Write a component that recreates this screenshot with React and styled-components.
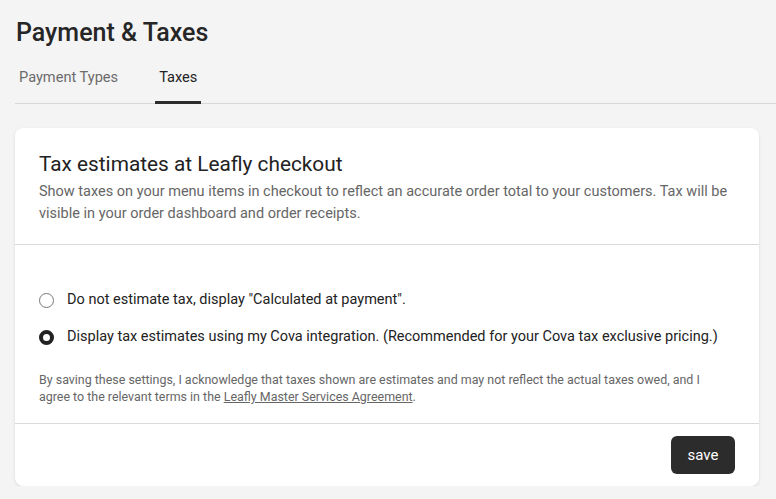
import React, { useState } from "react";
import styled, { createGlobalStyle } from "styled-components";

const Global = createGlobalStyle`
  html, body { margin: 0; padding: 0; background: #f4f4f4; }
  body { font-family: "Roboto", "Noto Sans", sans-serif; color: #222; }
  * { box-sizing: border-box; }
`;

const Page = styled.div`
  padding: 18px 0 0 15px;
`;

const Title = styled.h1`
  margin: 0 0 0 1px;
  font-size: 25px;
  font-weight: 500;
  line-height: 30px;
  color: #262626;
`;

const Tabs = styled.div`
  display: flex;
  gap: 33px;
  margin-top: 15px;
  border-bottom: 1px solid #d9d9d9;
  padding-left: 4px;
`;

const Tab = styled.button`
  border: none;
  background: none;
  font-family: inherit;
  font-size: 14.6px;
  line-height: 17px;
  padding: 6px 4px 15px;
  margin: 0;
  color: ${(p) => (p.$active ? "#222" : "#6b6b6b")};
  border-bottom: 3px solid ${(p) => (p.$active ? "#2c2c2c" : "transparent")};
  margin-bottom: -1px;
  cursor: pointer;
  &:first-child { padding-left: 0; }
`;

const Card = styled.section`
  margin: 24px 17px 0 0;
  background: #fff;
  border-radius: 8px;
  box-shadow: 0 1px 3px rgba(0, 0, 0, 0.12);
`;

const Section = styled.div`
  padding: ${(p) => p.$pad};
  border-bottom: ${(p) => (p.$divider ? "1px solid #dadada" : "none")};
`;

const CardTitle = styled.h2`
  margin: 0;
  font-size: 20.8px;
  font-weight: 400;
  line-height: 26px;
  color: #222;
`;

const Desc = styled.p`
  margin: 4px 0 0;
  font-size: 14.5px;
  line-height: 22px;
  color: #666;
`;

const Options = styled.div`
  display: flex;
  flex-direction: column;
  gap: 15px;
`;

const Option = styled.label`
  display: flex;
  align-items: center;
  gap: 13px;
  font-size: 14.5px;
  line-height: 22px;
  color: #222;
  cursor: pointer;
`;

const Radio = styled.span`
  width: 15px;
  height: 15px;
  border-radius: 50%;
  flex: none;
  border: ${(p) => (p.$checked ? "4.5px solid #222" : "1px solid #777")};
  background: #fff;
`;

const Fine = styled.p`
  margin: 23px 0 0;
  max-width: 680px;
  font-size: 12.45px;
  line-height: 17px;
  color: #666;
  a { color: #666; text-decoration: underline; }
`;

const Footer = styled.div`
  display: flex;
  justify-content: flex-end;
  padding: 12px 24px 12px;
`;

const SaveButton = styled.button`
  width: 64px;
  height: 38px;
  border: none;
  border-radius: 6px;
  background: #2c2c2c;
  color: #fff;
  font-family: inherit;
  font-size: 15px;
  cursor: pointer;
`;

export default function App() {
  const [choice, setChoice] = useState(1);
  const opts = [
    'Do not estimate tax, display "Calculated at payment".',
    "Display tax estimates using my Cova integration. (Recommended for your Cova tax exclusive pricing.)",
  ];
  return (
    <Page>
      <Global />
      <Title>Payment &amp; Taxes</Title>
      <Tabs>
        <Tab>Payment Types</Tab>
        <Tab $active>Taxes</Tab>
      </Tabs>
      <Card>
        <Section $divider $pad="23px 24px 19px">
          <CardTitle>Tax estimates at Leafly checkout</CardTitle>
          <Desc>
            Show taxes on your menu items in checkout to reflect an accurate order total to your customers. Tax will be
            visible in your order dashboard and order receipts.
          </Desc>
        </Section>
        <Section $divider $pad="44px 24px 18px">
          <Options>
            {opts.map((o, i) => (
              <Option key={i} onClick={() => setChoice(i)}>
                <Radio $checked={choice === i} />
                {o}
              </Option>
            ))}
          </Options>
          <Fine>
            By saving these settings, I acknowledge that taxes shown are estimates and may not reflect the actual taxes owed, and I
            agree to the relevant terms in the <a href="#">Leafly Master Services Agreement</a>.
          </Fine>
        </Section>
        <Footer>
          <SaveButton>save</SaveButton>
        </Footer>
      </Card>
    </Page>
  );
}
